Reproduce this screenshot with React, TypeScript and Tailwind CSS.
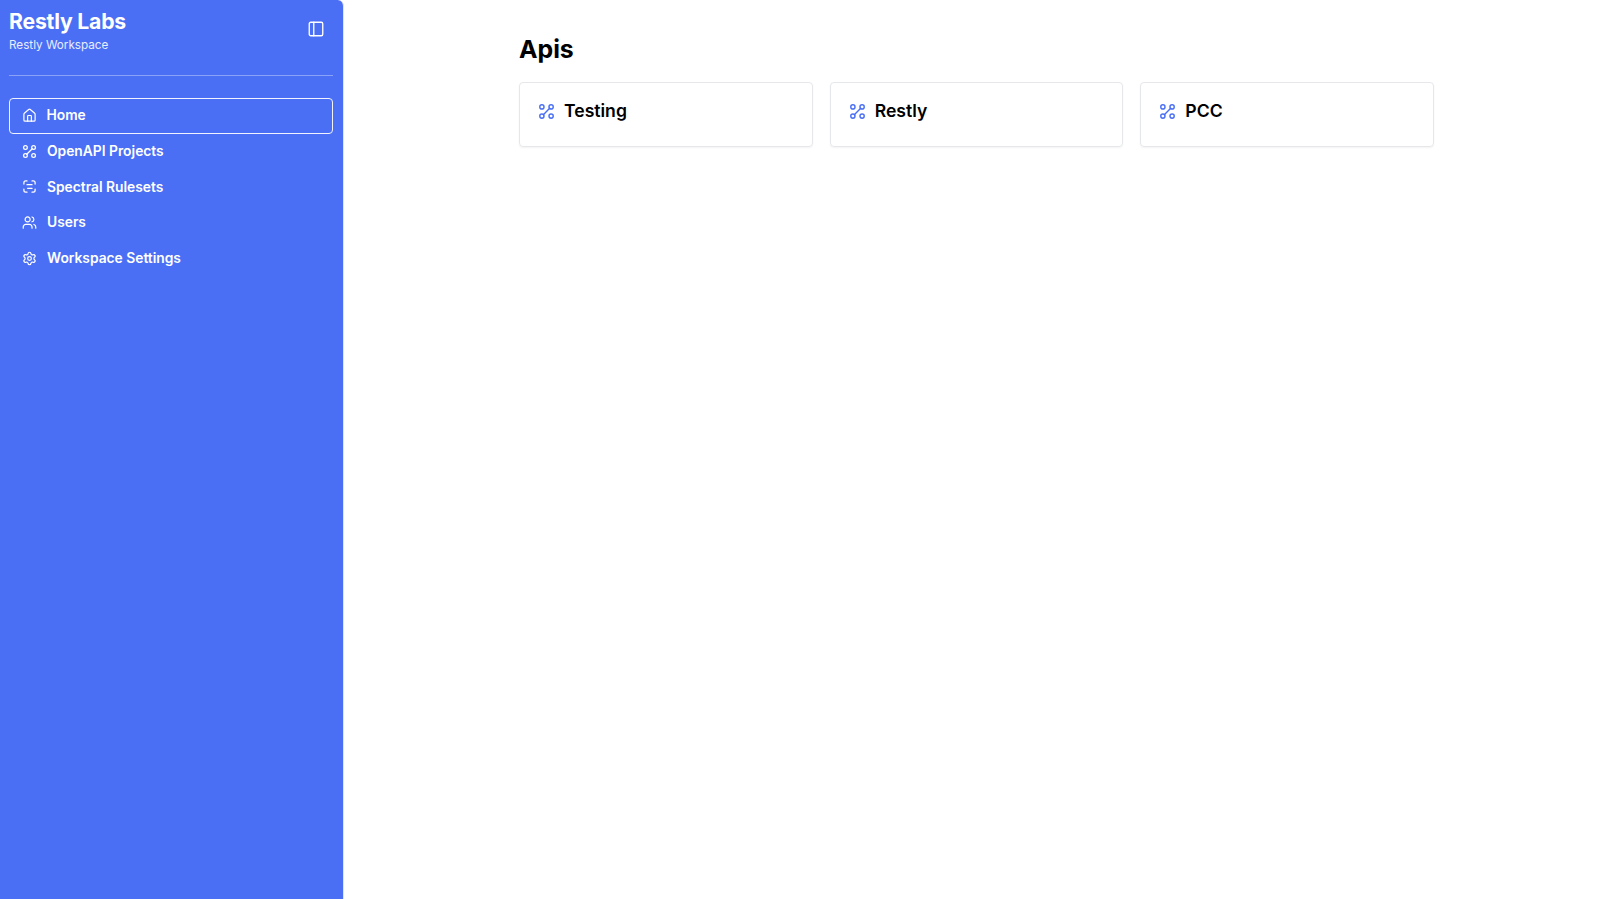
import { House, PanelLeft, Settings, Users } from 'lucide-react';
import React from 'react';

const font = "font-['Inter',sans-serif]";

// four circles with one diagonal, used for projects and api cards
const ApiIcon = ({ className }: { className: string }) => (
  <svg viewBox="0 0 24 24" fill="none" stroke="currentColor" strokeWidth="2" strokeLinecap="round" className={className}>
    <circle cx="5.5" cy="5.5" r="3" />
    <circle cx="18.5" cy="5.5" r="3" />
    <circle cx="5.5" cy="18.5" r="3" />
    <circle cx="18.5" cy="18.5" r="3" />
    <path d="M7.5 16.5l9-9" />
  </svg>
);

const ScanIcon = ({ className }: { className: string }) => (
  <svg viewBox="0 0 24 24" fill="none" stroke="currentColor" strokeWidth="2" strokeLinecap="round" strokeLinejoin="round" className={className}>
    <path d="M3 8V6a3 3 0 0 1 3-3h2" />
    <path d="M16 3h2a3 3 0 0 1 3 3v2" />
    <path d="M21 16v2a3 3 0 0 1-3 3h-2" />
    <path d="M8 21H6a3 3 0 0 1-3-3v-2" />
    <path d="M8 9h8" />
    <path d="M9 15h7" />
  </svg>
);

const navItems = [
  { label: 'Home', Icon: House, active: true },
  { label: 'OpenAPI Projects', Icon: ApiIcon, active: false },
  { label: 'Spectral Rulesets', Icon: ScanIcon, active: false },
  { label: 'Users', Icon: Users, active: false },
  { label: 'Workspace Settings', Icon: Settings, active: false },
];

const apis = ['Testing', 'Restly', 'PCC'];

export default function App() {
  return (
    <div className={`flex h-[899px] bg-white ${font}`}>
      <aside className="w-[344px] shrink-0 bg-[#4a6ff5] border-r border-[#dfe4f5] rounded-tr-md pl-[9px] pr-[10px] text-white">
        <div className="flex justify-between border-b border-[#8aa2f8] h-[76px]">
          <div className="pt-[8px]">
            <h1 className="text-[21.2px] leading-[26px] font-bold tracking-[-0.2px]">Restly Labs</h1>
            <p className="text-[11.7px] leading-[18px] mt-[2px] text-[#e8edff]">Restly Workspace</p>
          </div>
          <button className="mt-[20px] mr-[8px] h-[18px]">
            <PanelLeft className="w-[18px] h-[18px]" strokeWidth={1.8} />
          </button>
        </div>
        <nav className="mt-[22px] flex flex-col">
          {navItems.map(({ label, Icon, active }) => (
            <a
              key={label}
              className={`flex items-center gap-[10px] h-[35.6px] rounded text-[13.8px] font-semibold ${active ? 'border-[1.5px] border-[#f1f4ff] pl-[11.5px]' : 'border border-transparent pl-[12px]'}`}
            >
              <Icon className="w-[15px] h-[15px]" strokeWidth={1.9} />
              {label}
            </a>
          ))}
        </nav>
      </aside>
      <main className="flex-1 pl-[175px] pr-[166px] pt-[31px]">
        <h2 className="text-[24.8px] leading-[36px] font-bold text-black">Apis</h2>
        <div className="mt-[15px] grid grid-cols-3 gap-[17px]">
          {apis.map((name) => (
            <div key={name} className="h-[65px] rounded border border-[#e5e7eb] shadow-xs pl-[18px] pt-[14.5px]">
              <div className="flex items-center gap-[9px] h-[28px]">
                <ApiIcon className="w-[17px] h-[17px] text-[#4a6ff5]" />
                <span className="text-[17.6px] font-semibold text-black">{name}</span>
              </div>
            </div>
          ))}
        </div>
      </main>
    </div>
  );
}
